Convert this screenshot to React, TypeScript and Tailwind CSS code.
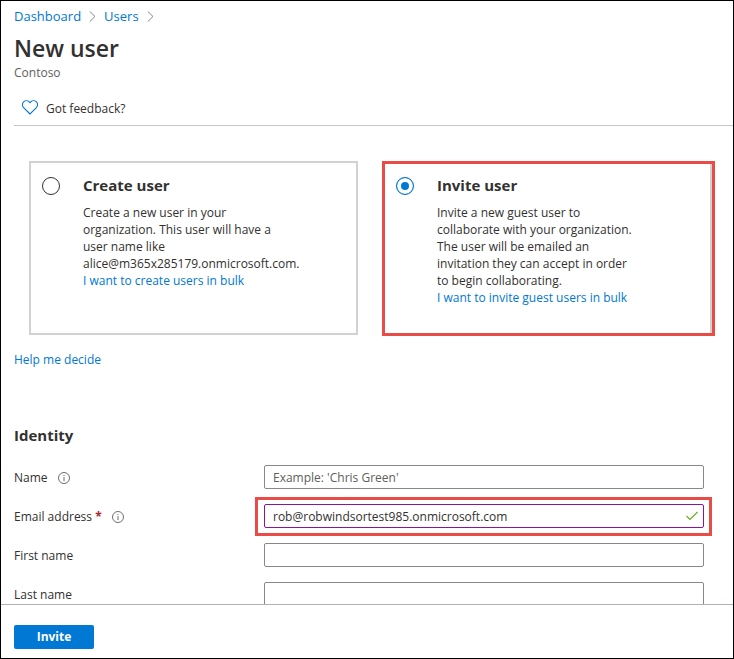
import type { ReactNode } from "react";

function Crumb({ children }: { children: ReactNode }) {
  return (
    <li className="flex items-center gap-2">
      <a href="#" className="text-[#0078d4] hover:underline">
        {children}
      </a>
      <svg width="7" height="11" viewBox="0 0 7 11" fill="none" stroke="#8a8886" aria-hidden="true">
        <path d="M0.8 0.5 L6 5.5 L0.8 10.5" />
      </svg>
    </li>
  );
}

function InfoIcon() {
  return (
    <svg width="12" height="12" viewBox="0 0 12 12" fill="none" stroke="#605e5c" aria-hidden="true">
      <circle cx="6" cy="6" r="5.5" strokeWidth="0.9" />
      <path d="M6 5 V9 M6 3 V4" strokeWidth="0.9" />
    </svg>
  );
}

function Highlight({ className }: { className: string }) {
  return <div aria-hidden="true" className={`pointer-events-none absolute border-3 border-[#e94b47] ${className}`} />;
}

type OptionProps = {
  id: string;
  title: string;
  link: string;
  checked?: boolean;
  highlighted?: boolean;
  children: ReactNode;
};

function OptionCard({ id, title, link, checked, highlighted, children }: OptionProps) {
  return (
    <div className="relative flex items-start gap-[23px] border-2 border-[#d2d2d2] px-[11px] pt-[10px] pb-[27px]">
      <input
        id={id}
        type="radio"
        name="mode"
        defaultChecked={checked}
        className="mt-1 size-[18px] shrink-0 appearance-none rounded-full border border-[#323130] bg-white checked:border-[#0078d4] checked:bg-[#0078d4] checked:shadow-[inset_0_0_0_4px_white]"
      />
      <div className="min-w-0">
        <label htmlFor={id} className="block text-[15px] leading-6 font-bold">
          {title}
        </label>
        <p className="mt-[7px] leading-[17px] whitespace-nowrap">{children}</p>
        <a href="#" className="block leading-[17px] whitespace-nowrap text-[#0078d4] hover:underline">
          {link}
        </a>
      </div>
      {highlighted && <Highlight className="-top-[2px] -right-[5px] -bottom-[3px] -left-[3px]" />}
    </div>
  );
}

type FieldProps = {
  id: string;
  label: string;
  placeholder?: string;
  value?: string;
  required?: boolean;
  info?: boolean;
};

function Field({ id, label, placeholder, value, required, info }: FieldProps) {
  return (
    <div className="flex h-6 items-center">
      <div className="flex w-[250px] shrink-0 items-center gap-[10px] pt-[2px]">
        <label htmlFor={id}>
          {label}
          {required && <span className="font-bold text-[#a4262c]"> *</span>}
        </label>
        {info && <InfoIcon />}
      </div>
      <div className="relative flex-1">
        <input
          id={id}
          type="text"
          placeholder={placeholder}
          defaultValue={value}
          required={required}
          className={`block h-6 w-full rounded-xs border bg-white px-2 outline-none placeholder:text-[#605e5c] ${
            value ? "border-[#881798]" : "border-[#8a8886]"
          }`}
        />
        {value && (
          <>
            <svg
              className="absolute top-[7px] right-[6px]"
              width="12"
              height="10"
              viewBox="0 0 12 10"
              fill="none"
              stroke="#6bb01f"
              strokeWidth="1.2"
              aria-hidden="true"
            >
              <path d="M0.5 5 L4 8.5 L11.5 1" />
            </svg>
            <Highlight className="-top-[7px] -right-[8px] -bottom-[8px] -left-[9px]" />
          </>
        )}
      </div>
    </div>
  );
}

export default function App() {
  return (
    <div className="flex h-screen flex-col border border-black bg-white font-['Open_Sans','Noto_Sans',sans-serif] text-[12px] text-[#323130]">
      <main className="min-h-0 flex-1 overflow-hidden">
        <header className="pl-[13px]">
          <nav aria-label="Breadcrumb" className="pt-[5px]">
            <ol className="flex gap-2 text-[13px] leading-5">
              <Crumb>Dashboard</Crumb>
              <Crumb>Users</Crumb>
            </ol>
          </nav>
          <h1 className="mt-[6px] text-[23px] leading-8 font-semibold">New user</h1>
          <p className="mt-px leading-4 text-[#605e5c]">Contoso</p>
          <div className="mt-[14px] flex h-7 items-center pl-2">
            <button type="button" className="flex items-center gap-2">
              <svg
                className="mb-1"
                width="16"
                height="15"
                viewBox="0 0 16 15"
                fill="none"
                stroke="#0078d4"
                strokeWidth="1.1"
                aria-hidden="true"
              >
                <path d="M8 14 L1.6 7.6 C-0.1 5.8 0.1 3.2 1.6 1.8 C3.2 0.3 5.7 0.3 7.2 1.8 L8 2.7 L8.8 1.8 C10.3 0.3 12.8 0.3 14.4 1.8 C15.9 3.2 16.1 5.8 14.4 7.6 Z" />
              </svg>
              Got feedback?
            </button>
          </div>
          <hr className="mt-[2px] border-[#c8c6c4]" />
        </header>

        <div className="mt-[35px] grid grid-cols-2 gap-[25px] pr-[21px] pl-7">
          <OptionCard id="create" title="Create user" link="I want to create users in bulk">
            Create a new user in your
            <br />
            organization. This user will have a
            <br />
            user name like
            <br />
            alice@m365x285179.onmicrosoft.com.
          </OptionCard>
          <OptionCard id="invite" title="Invite user" link="I want to invite guest users in bulk" checked highlighted>
            Invite a new guest user to
            <br />
            collaborate with your organization.
            <br />
            The user will be emailed an
            <br />
            invitation they can accept in order
            <br />
            to begin collaborating.
          </OptionCard>
        </div>

        <div className="pr-[29px] pl-[13px]">
          <a href="#" className="mt-[17px] inline-block leading-4 text-[#0078d4] hover:underline">
            Help me decide
          </a>
          <h2 className="mt-[54px] text-[15px] leading-6 font-bold">Identity</h2>
          <form className="mt-[18px] flex flex-col gap-[15px]">
            <Field id="name" label="Name" placeholder="Example: 'Chris Green'" info />
            <Field id="email" label="Email address" value="rob@robwindsortest985.onmicrosoft.com" required info />
            <Field id="first" label="First name" />
            <Field id="last" label="Last name" />
          </form>
        </div>
      </main>

      <footer className="border-t border-[#b3b0ad] px-[13px] pt-5 pb-[9px]">
        <button type="button" className="block h-6 w-20 rounded-xs bg-[#0078d4] font-bold text-white">
          Invite
        </button>
      </footer>
    </div>
  );
}
